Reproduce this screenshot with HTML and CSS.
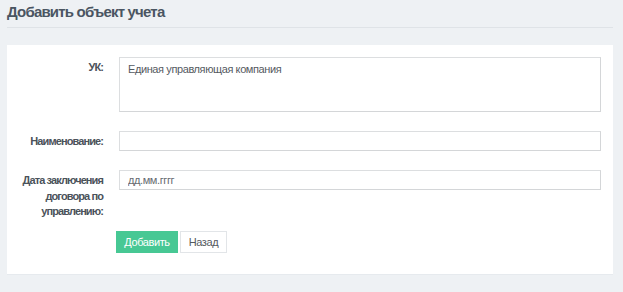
FILE: index.html
```html
<!DOCTYPE html>
<html lang="ru">

<head>
    <meta charset="UTF-8">
    <meta name="viewport" content="width=device-width, initial-scale=1.0">
    <title>Добавить объект учета</title>
    <link rel="stylesheet" href="styles.css">
</head>

<body>
    <div class="page">
        <h1 class="page-title">Добавить объект учета</h1>

        <form class="panel">
            <div class="form-row">
                <label class="form-label" for="uk">УК:</label>
                <textarea id="uk" class="form-control form-area">Единая управляющая компания</textarea>
            </div>
            <div class="form-row">
                <label class="form-label" for="name">Наименование:</label>
                <input id="name" class="form-control" type="text">
            </div>
            <div class="form-row form-row-last">
                <label class="form-label" for="date">Дата заключения договора по управлению:</label>
                <input id="date" class="form-control" type="text" placeholder="дд.мм.гггг">
            </div>
            <div class="form-actions">
                <button type="button" class="btn btn-green">Добавить</button>
                <button type="button" class="btn btn-white">Назад</button>
            </div>
        </form>
    </div>
</body>

</html>
```

FILE: styles.css
```css
body {
    font-family: 'Liberation Sans', Arial, sans-serif;
    background-color: #eef1f4;
    color: #4b525a;
    margin: 0;
}

.page {
    padding: 0 10px 0 7px;
}

.page-title {
    font-size: 15px;
    font-weight: 700;
    letter-spacing: -0.8px;
    color: #4a5562;
    margin: 0;
    padding: 4px 0 8px;
    line-height: 15px;
    border-bottom: 1px solid #dfe3e7;
}

.panel {
    margin-top: 17px;
    background: #ffffff;
    padding: 12px 12px 24px 0;
    border-bottom: 1px solid #e6eaee;
    box-sizing: border-box;
    height: 230px;
}

.form-row {
    display: flex;
    align-items: flex-start;
    margin-bottom: 19px;
}

.form-row-last {
    margin-bottom: 11px;
}

.form-label {
    width: 96px;
    flex-shrink: 0;
    margin-right: 16px;
    text-align: right;
    font-size: 11px;
    font-weight: 700;
    letter-spacing: -0.9px;
    line-height: 15.5px;
    padding-top: 3px;
}

.form-control {
    flex: 1;
    display: block;
    height: 20px;
    box-sizing: border-box;
    border: 1px solid #dcdee0;
    border-right-color: #d4d6d8;
    border-bottom-color: #d4d6d8;
    padding: 0 8px;
    font-family: inherit;
    font-size: 11px;
    letter-spacing: -0.4px;
    color: #555a5f;
    background: #ffffff;
    outline: none;
}

.form-control::placeholder {
    color: #666b70;
}

.form-area {
    height: 55px;
    padding-top: 5px;
    resize: none;
}

.form-actions {
    display: flex;
    gap: 2px;
    padding-left: 109px;
}

.btn {
    height: 22px;
    font-family: inherit;
    font-size: 11px;
    letter-spacing: -0.4px;
    padding: 0;
    border: 1px solid transparent;
    cursor: pointer;
}

.btn-green {
    background-color: #47c894;
    border-color: #47c894;
    color: #ffffff;
    width: 62px;
}

.btn-white {
    background-color: #ffffff;
    border-color: #e2e5e8;
    color: #555a5f;
    width: 47px;
}
```
